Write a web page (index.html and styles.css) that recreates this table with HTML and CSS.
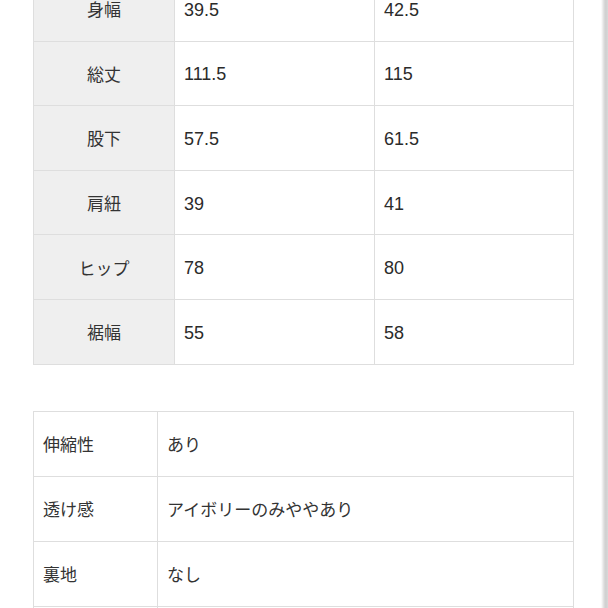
FILE: index.html
```html
<!DOCTYPE html>
<html lang="ja">
<head>
<meta charset="utf-8">
<link rel="stylesheet" href="styles.css">
</head>
<body>
<main class="page">
  <div class="size-table">
    <div class="cell head">身幅</div><div class="cell num">39.5</div><div class="cell num">42.5</div>
    <div class="cell head">総丈</div><div class="cell num">111.5</div><div class="cell num">115</div>
    <div class="cell head">股下</div><div class="cell num">57.5</div><div class="cell num">61.5</div>
    <div class="cell head">肩紐</div><div class="cell num">39</div><div class="cell num">41</div>
    <div class="cell head">ヒップ</div><div class="cell num">78</div><div class="cell num">80</div>
    <div class="cell head">裾幅</div><div class="cell num">55</div><div class="cell num">58</div>
  </div>
  <div class="info-table">
    <div class="cell">伸縮性</div><div class="cell">あり</div>
    <div class="cell">透け感</div><div class="cell">アイボリーのみややあり</div>
    <div class="cell">裏地</div><div class="cell">なし</div>
    <div class="cell"></div><div class="cell"></div>
  </div>
</main>
<div class="edge-shadow"></div>
</body>
</html>
```
FILE: styles.css
```css
html, body {
  margin: 0;
  padding: 0;
  background: #ffffff;
  overflow: hidden;
}
body {
  font-family: "Liberation Sans", "Noto Sans CJK JP", sans-serif;
  font-size: 17px;
  color: #333333;
}
.page {
  padding-left: 33px;
  margin-top: -24px;
}
.size-table {
  display: grid;
  grid-template-columns: 141px 200px 199px;
  grid-auto-rows: 64.6px;
  width: 541px;
  box-sizing: border-box;
  border-top: 1px solid #dedede;
  border-left: 1px solid #dedede;
}
.info-table {
  display: grid;
  grid-template-columns: 124px 416px;
  grid-auto-rows: 65px;
  width: 541px;
  box-sizing: border-box;
  margin-top: 46px;
  border-top: 1px solid #dedede;
  border-left: 1px solid #dedede;
}
.cell {
  box-sizing: border-box;
  border-right: 1px solid #dedede;
  border-bottom: 1px solid #dedede;
  display: flex;
  align-items: center;
  padding-left: 9px;
  white-space: nowrap;
}
.num {
  font-size: 18px;
  color: #2b2b2b;
  padding-top: 3px;
}
.head {
  background: #efefef;
  justify-content: center;
  padding-left: 0;
}
.edge-shadow {
  position: fixed;
  top: 0;
  right: 0;
  width: 7px;
  height: 100%;
  background: linear-gradient(to right, rgba(220,220,220,0), #dadada 45%, #cfcfcf 70%, #d9d9d9);
}
```
